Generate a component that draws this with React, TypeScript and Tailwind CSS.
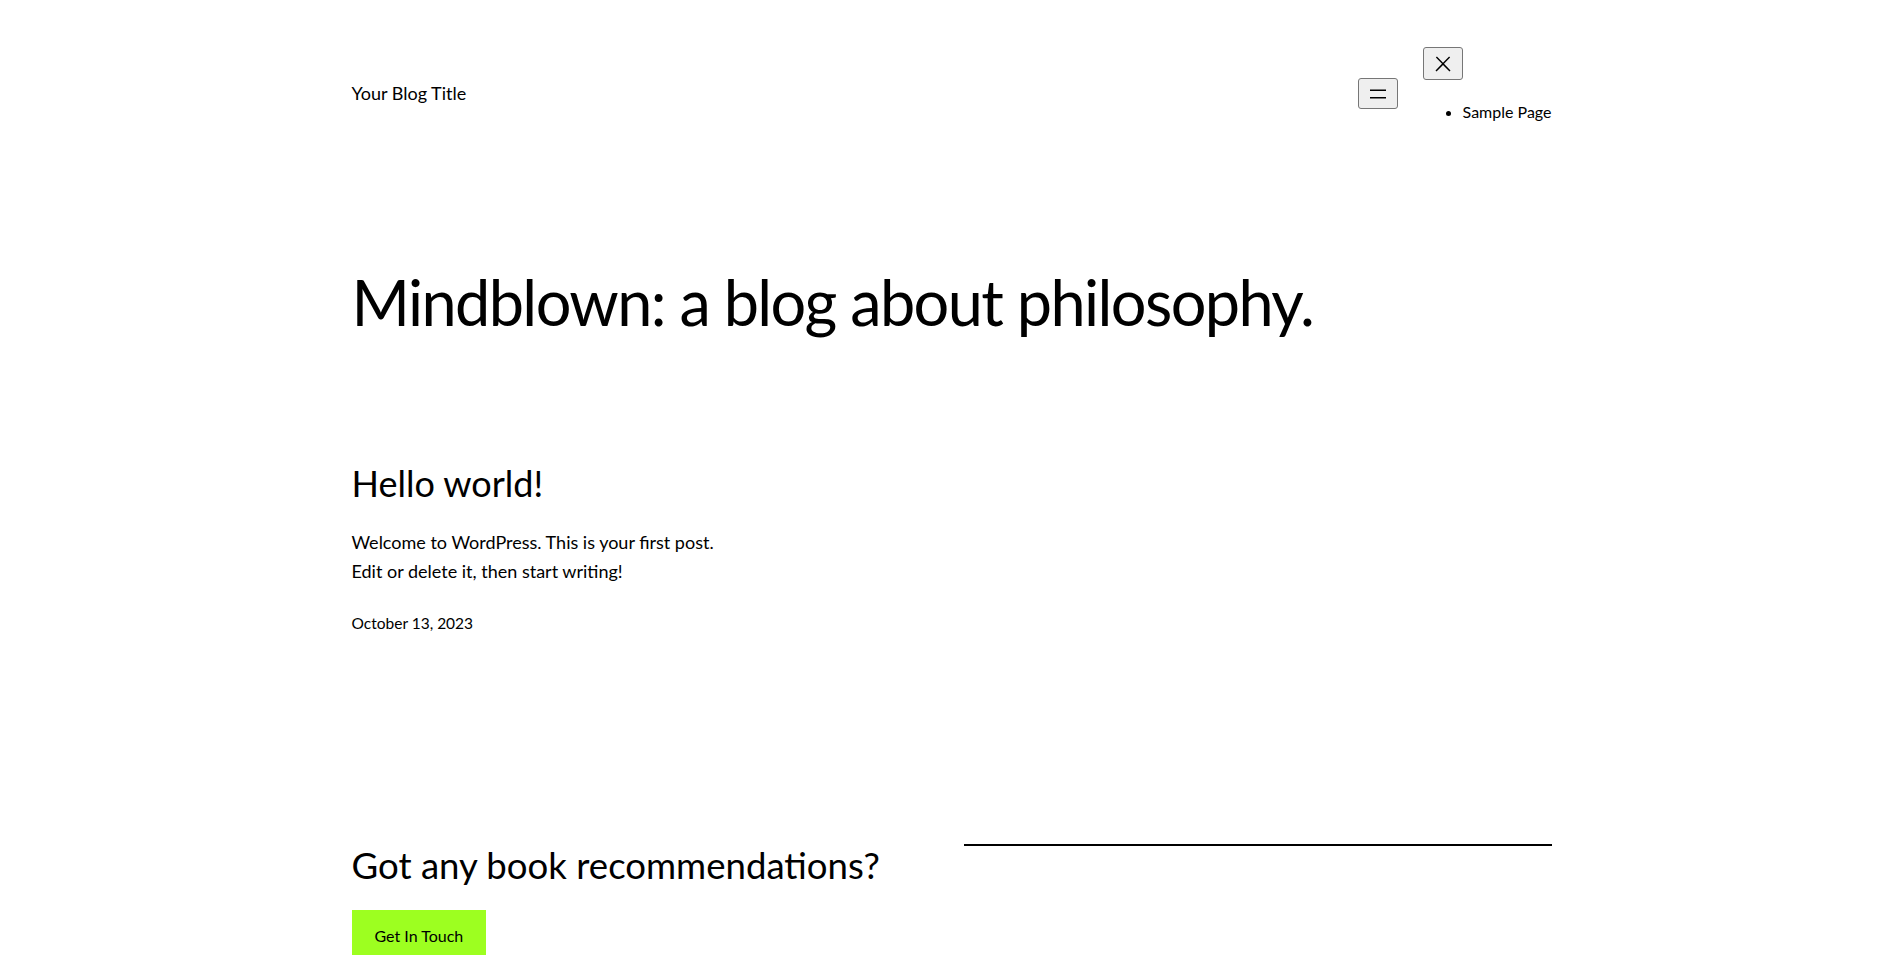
const MenuIcon = () => (
  <svg width="24" height="24" viewBox="0 0 24 24" aria-hidden="true">
    <path d="M4 7.5h16v1.5H4z M4 15h16v1.5H4z" fill="currentColor" />
  </svg>
);

const CloseIcon = () => (
  <svg width="24" height="24" viewBox="0 0 24 24" aria-hidden="true">
    <path
      d="M13 11.8l6.1-6.3-1-1-6.1 6.2-6.1-6.2-1 1 6.1 6.3-6.5 6.7 1 1 6.5-6.6 6.5 6.6 1-1z"
      fill="currentColor"
    />
  </svg>
);

const Header = () => {
  return (
    <header className="flex items-start justify-between pt-[47px]">
      <a href="#" className="mt-[33px] text-[18px] leading-[27px]">
        Your Blog Title
      </a>
      <nav className="flex items-start gap-[25px]">
        <button className="mt-[31px] flex h-[31px] w-[40px] items-center justify-center rounded-[3px] border border-[#767676] bg-[#efefef]">
          <MenuIcon />
        </button>
        <div className="flex flex-col items-start">
          <button className="flex h-[33px] w-[40px] items-center justify-center rounded-[3px] border border-[#767676] bg-[#efefef]">
            <CloseIcon />
          </button>
          <ul className="mt-[20px] list-disc pl-10 text-[16px] leading-[24px]">
            <li>
              <a href="#">Sample Page</a>
            </li>
          </ul>
        </div>
      </nav>
    </header>
  );
};

const Post = () => {
  return (
    <article className="mt-[122px]">
      <h2 className="text-[36px] leading-[1.2]">Hello world!</h2>
      <div className="mt-[23px] text-[18px] leading-[29px]">
        <p>Welcome to WordPress. This is your first post.</p>
        <p>Edit or delete it, then start writing!</p>
      </div>
      <div className="mt-[25px] text-[15.5px] leading-[24px]">October 13, 2023</div>
    </article>
  );
};

export default function App() {
  return (
    <div className="flex min-h-screen justify-center bg-white pl-[2px] font-['Lato',sans-serif] text-black">
      <div className="w-[1200px]">
        <Header />
        <h1 className="mt-[140px] text-[63px] leading-[1.2] tracking-[-1.6px]">
          Mindblown: a blog about philosophy.
        </h1>
        <Post />
        <section className="mt-[209px] flex gap-[24px]">
          <div className="w-1/2">
            <h2 className="text-[36.6px] leading-[1.2]">Got any book recommendations?</h2>
            <a
              href="#"
              className="mt-[22px] inline-block bg-[#9dff20] px-[23px] py-[14px] text-[16px] leading-[24px]"
            >
              Get In Touch
            </a>
          </div>
          <div className="w-1/2">
            <hr className="border-t-2 border-black" />
          </div>
        </section>
        <div className="h-[80px]" />
      </div>
    </div>
  );
}
